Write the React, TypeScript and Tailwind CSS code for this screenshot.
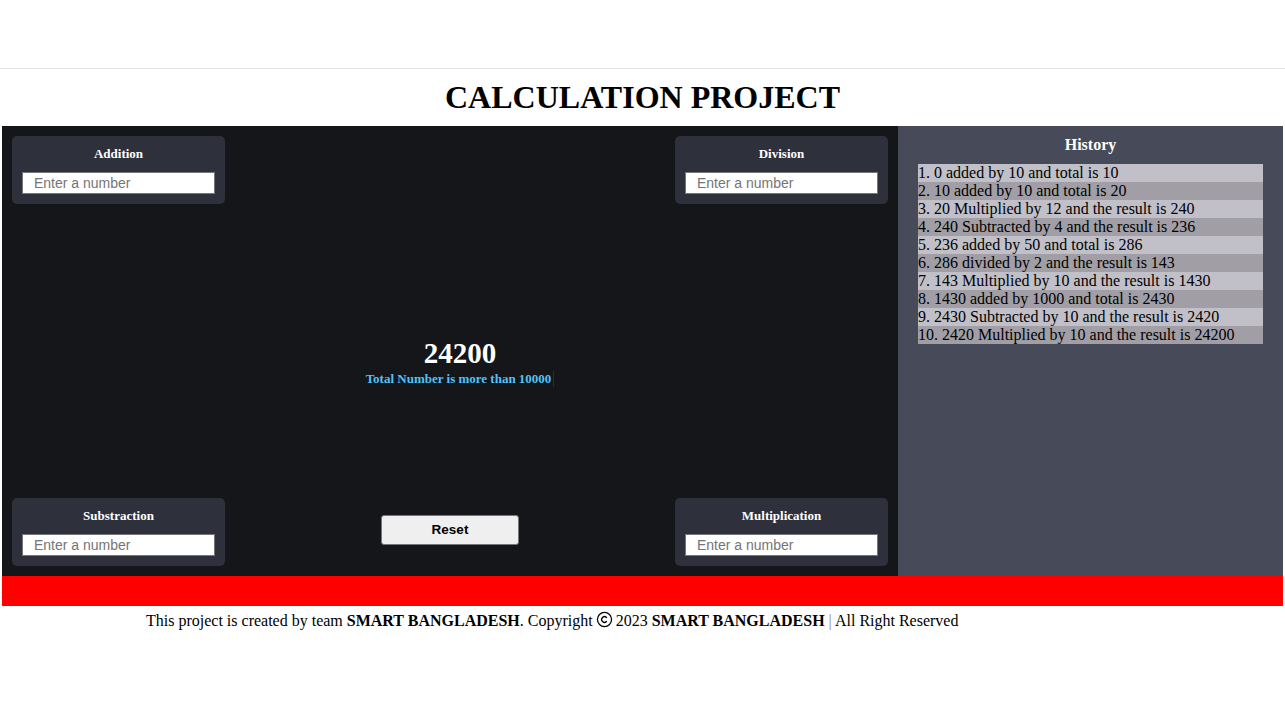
const history = [
  '0 added by 10 and total is 10',
  '10 added by 10 and total is 20',
  '20 Multiplied by 12 and the result is 240',
  '240 Subtracted by 4 and the result is 236',
  '236 added by 50 and total is 286',
  '286 divided by 2 and the result is 143',
  '143 Multiplied by 10 and the result is 1430',
  '1430 added by 1000 and total is 2430',
  '2430 Subtracted by 10 and the result is 2420',
  '2420 Multiplied by 10 and the result is 24200',
];

function OperationCard({ title }: { title: string }) {
  return (
    <div className="w-[213px] h-[68px] rounded-[5px] bg-[#2e303b] px-[10px] pt-[10px]">
      <h3 className="text-center text-[13px] leading-[16px] font-bold text-white font-['Liberation_Serif',serif]">
        {title}
      </h3>
      <input
        type="number"
        placeholder="Enter a number"
        className="mt-[10px] block w-[193px] h-[22px] bg-white border border-[#767676] pl-[11px] text-[14px] text-black placeholder:text-[#757575] font-['Liberation_Sans',Arial,sans-serif] outline-none"
      />
    </div>
  );
}

function CopyrightIcon() {
  return (
    <svg
      width="17"
      height="17"
      viewBox="0 0 24 24"
      fill="none"
      stroke="currentColor"
      strokeWidth="1.8"
      strokeLinecap="round"
      className="inline-block align-[-2px] mx-[3px]"
    >
      <circle cx="12" cy="12" r="10" />
      <path d="M14.83 14.83a4 4 0 1 1 0-5.66" />
    </svg>
  );
}

export default function App() {
  return (
    <div className="min-h-screen bg-white font-['Liberation_Serif',serif] text-black">
      <div className="h-[68px]" />
      <div className="border-t border-[#e2e2e2] h-[58px] pb-[1px] flex items-center justify-center">
        <h1 className="text-[32px] font-bold leading-none">CALCULATION PROJECT</h1>
      </div>

      <main className="mx-[2px] flex h-[450px]">
        <section className="w-[896px] bg-[#15161a] p-[10px] flex flex-col justify-between">
          <div className="flex justify-between">
            <OperationCard title="Addition" />
            <OperationCard title="Division" />
          </div>

          <div className="flex-1 flex flex-col items-center justify-center pl-[20px] pt-[20px]">
            <h2 className="text-[29px] leading-[34px] font-bold text-white">24200</h2>
            <p className="mt-[1px] text-[13px] leading-[16px] font-bold text-[#4fc3f7] flex items-center">
              Total Number is more than 10000
              <span className="ml-[2px] inline-block w-px h-[16px] bg-[#2b2d33]" />
            </p>
          </div>

          <div className="flex justify-between items-center">
            <OperationCard title="Substraction" />
            <button className="w-[138px] h-[30px] mb-[4px] rounded-[3px] bg-[#efefef] border border-[#767676] text-[13.5px] font-bold text-black font-['Liberation_Sans',Arial,sans-serif]">
              Reset
            </button>
            <OperationCard title="Multiplication" />
          </div>
        </section>

        <aside className="flex-1 bg-[#474a59] px-[20px] pt-[9px]">
          <h2 className="text-center text-[16px] leading-[19px] font-bold text-white">History</h2>
          <ol className="mt-[10px]">
            {history.map((item, i) => (
              <li
                key={i}
                className={`text-[16px] leading-[18px] text-black whitespace-nowrap ${
                  i % 2 === 0 ? 'bg-[#c1c0c8]' : 'bg-[#a19fa5]'
                }`}
              >
                {i + 1}. {item}
              </li>
            ))}
          </ol>
        </aside>
      </main>

      <div className="mx-[2px] h-[30px] bg-[#ff0000]" />

      <footer className="pl-[146px] pt-[5px] text-[16px] leading-[18px]">
        This project is created by team <b>SMART BANGLADESH</b>. Copyright
        <CopyrightIcon />
        2023 <b>SMART BANGLADESH</b> <span className="text-[#888]">|</span> All Right Reserved
      </footer>
    </div>
  );
}
